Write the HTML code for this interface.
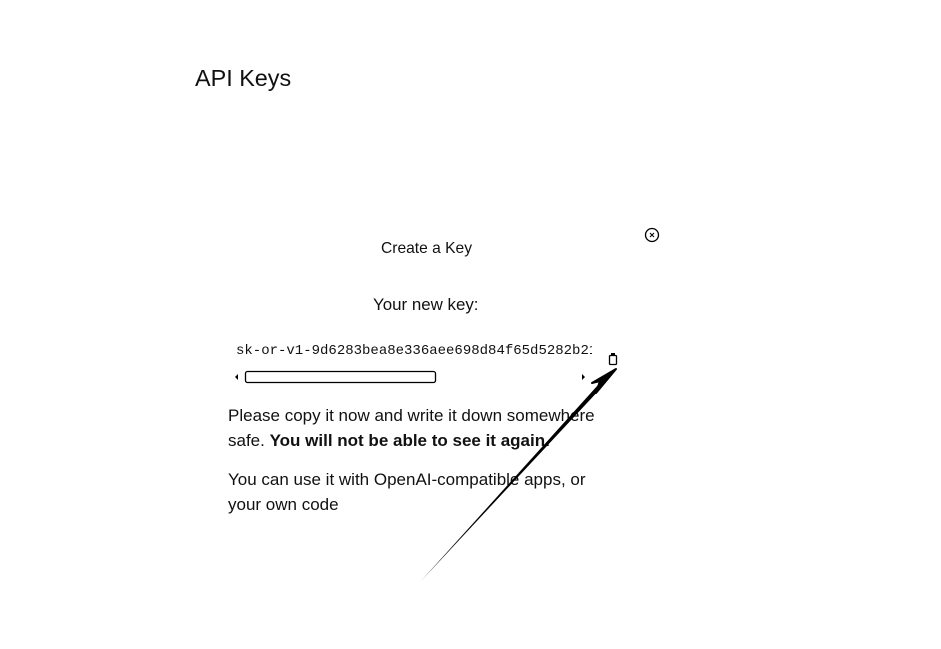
<!DOCTYPE html>
<html><head><meta charset="utf-8"><style>
html,body{margin:0;padding:0;width:941px;height:649px;background:#fff;overflow:hidden;font-family:"Liberation Sans",sans-serif;color:#111}
.a{position:absolute;white-space:nowrap}
</style></head><body>
<div class="a" style="left:195px;top:65px;font-size:23.4px;">API Keys</div>
<div class="a" style="left:381px;top:240px;font-size:15.6px;">Create a Key</div>
<div class="a" style="left:373px;top:295px;font-size:16.9px;">Your new key:</div>
<div class="a" style="left:236px;top:343px;font-family:'Liberation Mono',monospace;font-size:14px;width:356px;overflow:hidden">sk-or-v1-9d6283bea8e336aee698d84f65d5282b21</div>
<div class="a" style="left:228px;top:403px;font-size:17px;line-height:25px;">Please copy it now and write it down somewhere<br>safe. <b>You will not be able to see it again.</b></div>
<div class="a" style="left:228px;top:467px;font-size:17px;line-height:25px;">You can use it with OpenAI-compatible apps, or<br>your own code</div>
<svg class="a" style="left:0;top:0" width="941" height="649">
<circle cx="652" cy="235" r="6.5" fill="none" stroke="#000" stroke-width="1.3"/>
<path d="M650 233l4 4M654 233l-4 4" stroke="#000" stroke-width="1"/>
<rect x="609.5" y="355.5" width="7" height="9" rx="1" fill="none" stroke="#000" stroke-width="1.3"/>
<rect x="611" y="353" width="4" height="2" fill="#000"/>
<path d="M238 374l-3 3 3 3z" fill="#000"/>
<path d="M582 374l3 3-3 3z" fill="#000"/>
<rect x="245.5" y="371.5" width="190" height="11" rx="2" fill="none" stroke="#000" stroke-width="1.3"/>
<path d="M421 581L598 385L601 388Z" fill="#000"/>
<path d="M616 369L592 383L600 381L596 393Z" fill="#000" stroke="#000" stroke-width="2" stroke-linejoin="round"/>
</svg>
</body></html>
